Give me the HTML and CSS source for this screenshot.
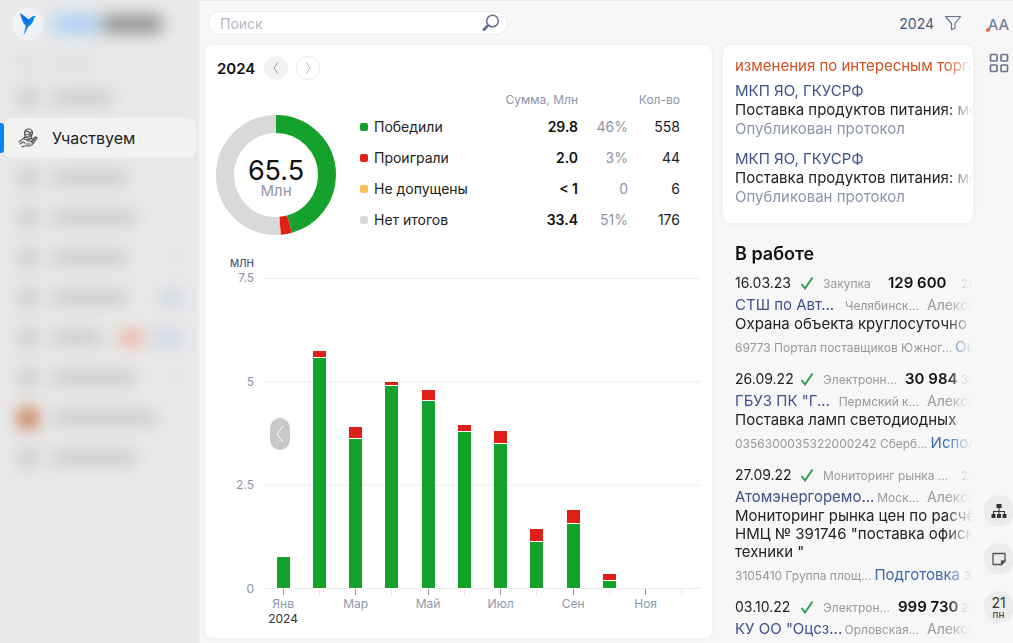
FILE: index.html
```html
<!DOCTYPE html>
<html lang="ru">
<head>
    <meta charset="UTF-8">
    <meta name="viewport" content="width=device-width, initial-scale=1.0">
    <title>Участвуем</title>
    <link rel="stylesheet" href="styles.css">
</head>
<body>
    <div class="app">
        <nav class="sidebar">
            <div class="brand">
                <span class="logo">
                    <svg width="18" height="24" viewBox="0 0 18 24"><path d="M1 1 9.500 7.500 12.500 5Q14 3.600 17 4.200L15 6Q14.200 11.500 9.500 14.500L4.500 23 6.800 14Q3 10.500 1 1Z" fill="#0a84ee"/><path d="M1 1 9.500 7.500 8 12Z" fill="#0870dc"/></svg>
                </span>
                <span class="blur blue w-50"></span>
                <span class="blur dark w-60"></span>
            </div>
            <div class="menu-item faint"><span class="blur icon"></span><span class="blur w-40"></span></div>
            <div class="menu-item"><span class="blur icon"></span><span class="blur w-60"></span></div>
            <a class="menu-item active" href="#">
                <svg width="21" height="20" viewBox="0 0 21 20" fill="none" stroke="#555" stroke-width="1.100" stroke-linecap="round" stroke-linejoin="round"><circle cx="10.500" cy="5" r="4"/><path d="M7 4q2-2 4 0t3-1M7 7q2-2 4 0t3-1M8 2.500q3 1 5 4.500M7 8l-1 3 4 1 4-2-1-2M1 14l5-4q2-1 4 0l4 1q1 2-1 2H9M2 16l3-2 2 1M4 19l2-1h6q3-1 7-8-1-2-3 0l-3 4M14 15l4-6M8 16h4"/></svg>
                <span>Участвуем</span>
            </a>
            <div class="menu-item"><span class="blur icon"></span><span class="blur w-75"></span></div>
            <div class="menu-item"><span class="blur icon"></span><span class="blur w-85"></span></div>
            <div class="menu-item"><span class="blur icon"></span><span class="blur w-75"></span><span class="blur pale w-15 end"></span></div>
            <div class="menu-item"><span class="blur icon"></span><span class="blur w-75"></span><span class="blur badge w-20 end"></span></div>
            <div class="menu-item"><span class="blur icon"></span><span class="blur w-50"></span><span class="blur red w-20 end"></span><span class="blur badge w-30"></span></div>
            <div class="menu-item"><span class="blur icon"></span><span class="blur w-85"></span><span class="blur pale w-15 end"></span></div>
            <div class="menu-item"><span class="blur icon photo"></span><span class="blur w-100"></span></div>
            <div class="menu-item"><span class="blur icon"></span><span class="blur w-85"></span></div>
        </nav>

        <main class="main">
            <header class="topbar">
                <form class="search">
                    <input type="text" placeholder="Поиск" aria-label="Поиск">
                    <button type="button" aria-label="Найти">
                        <svg width="18" height="18" viewBox="0 0 18 18" fill="none" stroke="#68718f"><circle cx="10.500" cy="7" r="5.800" stroke-width="1.500"/><path d="M6.300 11.300 5 12.500" stroke-width="1.500"/><path d="M5 12.500 2 15.500" stroke-width="3" stroke-linecap="round"/></svg>
                    </button>
                </form>
                <button class="filter" type="button">
                    2024
                    <svg width="18" height="16" viewBox="0 0 18 16" fill="none" stroke="#68718f" stroke-width="1.200" stroke-linejoin="round"><path d="M1.500 1.500h15L11 8.500V13l-3.500 1.800V8.500Z"/></svg>
                </button>
            </header>

            <div class="content">
                <section class="card stats">
                    <div class="period">
                        <h2>2024</h2>
                        <button class="round filled" type="button" aria-label="Назад"><svg width="8" height="14" viewBox="0 0 8 14"><path d="M6 1 2 7l4 6"/></svg></button>
                        <button class="round" type="button" aria-label="Вперёд"><svg width="8" height="14" viewBox="0 0 8 14"><path d="m2 1 4 6-4 6"/></svg></button>
                    </div>

                    <div class="summary">
                        <div class="donut">
                            <svg viewBox="0 0 120 120" fill="none" stroke-width="18">
                                <g transform="rotate(-90 60 60)">
                                    <circle cx="60" cy="60" r="51" pathLength="100" stroke="#14a22c" stroke-dasharray="45.700 54.300"/>
                                    <circle cx="60" cy="60" r="51" pathLength="100" stroke="#dd2118" stroke-dasharray="3 97" stroke-dashoffset="-45.700"/>
                                    <circle cx="60" cy="60" r="51" pathLength="100" stroke="#fdbd57" stroke-dasharray="0.300 99.700" stroke-dashoffset="-48.700"/>
                                    <circle cx="60" cy="60" r="51" pathLength="100" stroke="#d9d9d9" stroke-dasharray="51 49" stroke-dashoffset="-49"/>
                                </g>
                            </svg>
                            <div class="total"><strong>65.5</strong><span>Млн</span></div>
                        </div>
                        <table class="results">
                            <thead>
                                <tr><th></th><th>Сумма, Млн</th><th></th><th>Кол-во</th></tr>
                            </thead>
                            <tbody>
                                <tr><td class="won">Победили</td><td>29.8</td><td>46%</td><td>558</td></tr>
                                <tr><td class="lost">Проиграли</td><td>2.0</td><td>3%</td><td>44</td></tr>
                                <tr><td class="rejected">Не допущены</td><td>&lt; 1</td><td>0</td><td>6</td></tr>
                                <tr><td class="pending">Нет итогов</td><td>33.4</td><td>51%</td><td>176</td></tr>
                            </tbody>
                        </table>
                    </div>

                    <div class="chart">
                        <div class="unit">млн</div>
                        <div class="axis"><span>7.5</span><span>5</span><span>2.5</span><span>0</span></div>
                        <div class="plot">
                            <div class="bar"><i class="green" style="height: 10%"></i></div>
                            <div class="bar"><i class="red" style="height: 1.7%"></i><i class="green" style="height: 74.3%"></i></div>
                            <div class="bar"><i class="red" style="height: 3.3%"></i><i class="green" style="height: 48.2%"></i></div>
                            <div class="bar"><i class="red" style="height: 0.7%"></i><i class="green" style="height: 65.3%"></i></div>
                            <div class="bar"><i class="red" style="height: 3%"></i><i class="green" style="height: 60.4%"></i></div>
                            <div class="bar"><i class="red" style="height: 2%"></i><i class="green" style="height: 50.2%"></i></div>
                            <div class="bar"><i class="red" style="height: 3.9%"></i><i class="green" style="height: 46.3%"></i></div>
                            <div class="bar"><i class="red" style="height: 3.6%"></i><i class="green" style="height: 15%"></i></div>
                            <div class="bar"><i class="red" style="height: 4.3%"></i><i class="green" style="height: 20.5%"></i></div>
                            <div class="bar"><i class="red" style="height: 1.7%"></i><i class="green" style="height: 2.4%"></i></div>
                            <div class="bar"></div>
                            <div class="bar"></div>
                            <button class="prev" type="button" aria-label="Предыдущий год"><svg width="8" height="18" viewBox="0 0 8 18"><path d="M7 1 1 9l6 8"/></svg></button>
                        </div>
                        <div class="months">
                            <span>Янв<b>2024</b></span><span></span><span>Мар</span><span></span><span>Май</span><span></span>
                            <span>Июл</span><span></span><span>Сен</span><span></span><span>Ноя</span><span></span>
                        </div>
                    </div>
                </section>

                <aside class="feed">
                    <section class="card news">
                        <div class="fade">
                            <a class="news-title" href="#">изменения по интересным торга</a>
                            <article>
                                <a href="#">МКП ЯО, ГКУСРФ</a>
                                <p>Поставка продуктов питания: мо</p>
                                <span>Опубликован протокол</span>
                            </article>
                            <article>
                                <a href="#">МКП ЯО, ГКУСРФ</a>
                                <p>Поставка продуктов питания: мо</p>
                                <span>Опубликован протокол</span>
                            </article>
                        </div>
                    </section>

                    <section class="work fade">
                        <h2>В работе</h2>
                        <article>
                            <div class="row">
                                <time>16.03.23</time>
                                <svg class="check" width="14" height="14" viewBox="0 0 14 14"><path d="m1.500 8 3.500 4.500L12.500 1.500"/></svg>
                                <span class="type">Закупка</span><b>129 600</b><span class="count">28</span>
                            </div>
                            <div class="row company"><a href="#">СТШ по Авт...</a><span class="region">Челябинск...</span><span class="person">Алексе</span></div>
                            <p>Охрана объекта круглосуточно</p>
                            <div class="row source"><span>69773 Портал поставщиков Южног...</span><a href="#">Оц</a></div>
                        </article>
                        <article>
                            <div class="row">
                                <time>26.09.22</time>
                                <svg class="check" width="14" height="14" viewBox="0 0 14 14"><path d="m1.500 8 3.500 4.500L12.500 1.500"/></svg>
                                <span class="type">Электронн...</span><b>30 984</b><span class="count">30</span>
                            </div>
                            <div class="row company"><a href="#">ГБУЗ ПК "Г...</a><span class="region">Пермский к...</span><span class="person">Алексе</span></div>
                            <p>Поставка ламп светодиодных</p>
                            <div class="row source"><span>0356300035322000242 Сберб...</span><a href="#">Исполн</a></div>
                        </article>
                        <article>
                            <div class="row">
                                <time>27.09.22</time>
                                <svg class="check" width="14" height="14" viewBox="0 0 14 14"><path d="m1.500 8 3.500 4.500L12.500 1.500"/></svg>
                                <span class="type">Мониторинг рынка ...</span><span class="count">23</span>
                            </div>
                            <div class="row company"><a href="#">Атомэнергоремо...</a><span class="region">Моск...</span><span class="person">Алексе</span></div>
                            <p>Мониторинг рынка цен по расчё<br>НМЦ № 391746 "поставка офисн<br>техники "</p>
                            <div class="row source"><span>3105410 Группа площ...</span><a href="#">Подготовка за</a></div>
                        </article>
                        <article>
                            <div class="row">
                                <time>03.10.22</time>
                                <svg class="check" width="14" height="14" viewBox="0 0 14 14"><path d="m1.500 8 3.500 4.500L12.500 1.500"/></svg>
                                <span class="type">Электрон...</span><b>999 730</b><span class="count">23</span>
                            </div>
                            <div class="row company"><a href="#">КУ ОО "Оцсз...</a><span class="region">Орловская...</span><span class="person">Алексе</span></div>
                        </article>
                    </section>
                </aside>
            </div>
        </main>

        <div class="rail">
            <button class="user" type="button">АА</button>
            <button class="tiles" type="button" aria-label="Приложения">
                <svg width="20" height="20" viewBox="0 0 20 20" fill="none" stroke="#6c748f" stroke-width="1.700"><rect x="1.500" y="1.500" width="6.500" height="6.500" rx="1"/><rect x="12" y="1.500" width="6.500" height="6.500" rx="1"/><rect x="1.500" y="12" width="6.500" height="6.500" rx="1"/><rect x="12" y="12" width="6.500" height="6.500" rx="1"/></svg>
            </button>
            <div class="tools">
                <button type="button" aria-label="Структура">
                    <svg width="16" height="16" viewBox="0 0 16 16" fill="#333"><rect x="5.500" y="1" width="5" height="4"/><path d="M7.500 5h1v3H14v3h-1V9H8.500v2h-1V9H3v2H2V8h5.500Z"/><rect x="0.500" y="11" width="4" height="4"/><rect x="6" y="11" width="4" height="4"/><rect x="11.500" y="11" width="4" height="4"/></svg>
                </button>
                <button type="button" aria-label="Заметка">
                    <svg width="14" height="14" viewBox="0 0 14 14" fill="none" stroke="#555" stroke-width="1.300" stroke-linejoin="round"><path d="M1 1.500h12V9l-3.500 3.500H1Z"/><path d="M13 9H9.500v3.500Z" fill="#555"/></svg>
                </button>
                <button class="date" type="button">21<small>пн</small></button>
            </div>
        </div>
    </div>
</body>
</html>
```

FILE: styles.css
```css
* {
    box-sizing: border-box;
}
body {
    margin: 0;
    font-family: Inter, "Open Sans", sans-serif;
    font-size: 15px;
    color: #222;
    background-color: #f7f7f7;
}
h2, p {
    margin: 0;
}
a {
    color: #40528c;
    text-decoration: none;
}
button {
    padding: 0;
    border: none;
    background: none;
    font-family: inherit;
    cursor: pointer;
}
svg {
    display: block;
    flex-shrink: 0;
}
.app {
    display: grid;
    grid-template-columns: 200px minmax(0, 1fr) 40px;
    height: 100vh;
    overflow: hidden;
    border-top: 1px solid #e8e8e8;
}

/* Sidebar */
.sidebar {
    background-color: #e9e9e9;
    border-right: 2px solid #f0f0f0;
}
.brand {
    display: flex;
    align-items: center;
    height: 45px;
    padding-left: 12px;
}
.logo {
    display: flex;
    align-items: center;
    justify-content: center;
    width: 32px;
    height: 32px;
    margin-right: 8px;
    border-radius: 50%;
    background-color: #f1f2f7;
}
.menu-item {
    display: flex;
    align-items: center;
    height: 40px;
    padding: 0 15px 0 18px;
}
.menu-item.faint {
    height: 32px;
    opacity: 0.3;
}
.menu-item.active {
    position: relative;
    gap: 13px;
    margin: 0 2px 0 4px;
    padding-left: 14px;
    border-radius: 8px;
    background-color: #f2f2f2;
    color: #222;
    font-size: 16px;
}
.menu-item.active::before {
    content: "";
    position: absolute;
    left: -4px;
    top: 5px;
    bottom: 5px;
    width: 4px;
    border-radius: 0 3px 3px 0;
    background-color: #0a84f5;
}
.blur {
    height: 14px;
    border-radius: 4px;
    background-color: #c9c9c9;
    filter: blur(8px);
}
.blur.icon {
    width: 20px;
    height: 20px;
    margin-right: 14px;
    background-color: #cdcdcd;
}
.blur.blue { height: 18px; background-color: #acd0f8; }
.blur.dark { height: 18px; background-color: #909090; }
.blur.badge { background-color: #ccd3e4; }
.blur.pale { background-color: #dfe4ec; }
.blur.red { background-color: #efa899; margin-right: 8px; }
.blur.photo { background-color: #c87850; }
.end { margin-left: auto; }
.w-15 { width: 15px; }
.w-20 { width: 24px; }
.w-30 { width: 32px; }
.w-40 { width: 40px; }
.w-50 { width: 50px; }
.w-60 { width: 60px; }
.w-75 { width: 75px; }
.w-85 { width: 84px; }
.w-100 { width: 105px; }

/* Top bar */
.main {
    display: flex;
    flex-direction: column;
    min-height: 0;
    padding: 0 0 5px 5px;
}
.topbar {
    display: flex;
    align-items: center;
    justify-content: space-between;
    flex-shrink: 0;
    height: 44px;
    padding: 0 11px 0 3px;
}
.search {
    display: flex;
    align-items: center;
    width: 300px;
    height: 24px;
    padding: 0 7px 0 11px;
    border: 1px solid #ebebeb;
    border-radius: 12px;
    background-color: #fff;
}
.search input {
    flex: 1;
    min-width: 0;
    padding: 0;
    border: none;
    outline: none;
    background: none;
    font-family: inherit;
    font-size: 14px;
}
.search input::placeholder {
    color: #b4b8c4;
}
.filter {
    display: flex;
    align-items: center;
    gap: 10px;
    color: #4a577f;
    font-size: 14px;
}

/* Cards */
.content {
    display: grid;
    grid-template-columns: minmax(0, 1fr) 250px;
    gap: 11px;
    flex: 1;
    min-height: 0;
}
.card {
    border-radius: 8px;
    background-color: #fff;
    box-shadow: 0 0 6px rgba(0, 0, 0, 0.06);
}
.stats {
    display: flex;
    flex-direction: column;
    padding: 11px 12px 0 0;
}
.period {
    display: flex;
    align-items: center;
    gap: 8px;
    padding-left: 12px;
}
.period h2 {
    margin-right: 1px;
    font-size: 15px;
    font-weight: 600;
    color: #111;
}
.round {
    display: flex;
    align-items: center;
    justify-content: center;
    width: 24px;
    height: 24px;
    border: 1px solid #e8e8e8;
    border-radius: 50%;
}
.round.filled {
    background-color: #f2f2f2;
    border-color: #f2f2f2;
}
.round path, .prev path {
    fill: none;
    stroke: #bbb;
}
.round.filled path {
    stroke: #999eae;
}
.summary {
    display: flex;
    align-items: flex-end;
    gap: 24px;
    padding: 7px 20px 0 11px;
}
.donut {
    display: grid;
    flex-shrink: 0;
    width: 120px;
}
.donut > * {
    grid-area: 1 / 1;
}
.total {
    align-self: center;
    padding-top: 10px;
    text-align: center;
    line-height: 18px;
    color: #8e96ab;
    font-size: 15px;
}
.total strong {
    display: block;
    line-height: 22px;
    font-size: 27px;
    font-weight: 400;
    color: #111;
}
.results {
    flex: 1;
    border-collapse: collapse;
    text-align: right;
}
.results th {
    height: 24px;
    padding: 0;
    font-size: 12px;
    font-weight: 400;
    color: #8e96ab;
}
.results td {
    height: 31px;
    padding: 0;
    font-size: 14px;
}
.results td:first-child {
    text-align: left;
}
.results td:first-child::before {
    content: "";
    display: inline-block;
    width: 8px;
    height: 8px;
    margin-right: 6px;
    border-radius: 2px;
    vertical-align: 1px;
}
.results .won::before { background-color: #14a22c; }
.results .lost::before { background-color: #dd2118; }
.results .rejected::before { background-color: #fdbd57; }
.results .pending::before { background-color: #d9d9d9; }
.results td:nth-child(2) {
    font-weight: 600;
    color: #111;
}
.results td:nth-child(3) {
    width: 50px;
    color: #8e96ab;
}
.results td:nth-child(4) {
    width: 52px;
}

/* Chart */
.chart {
    display: grid;
    grid-template-columns: 49px minmax(0, 1fr);
    grid-template-rows: 16px minmax(0, 1fr) 49px;
    column-gap: 11px;
    flex: 1;
    min-height: 0;
    padding-top: 20px;
    font-size: 12px;
    color: #8e96ab;
}
.unit {
    grid-row: 1;
    grid-column: 1;
    text-align: right;
    text-transform: uppercase;
    font-size: 10px;
    font-weight: 500;
    line-height: 16px;
    color: #4a577f;
}
.axis {
    grid-row: 2;
    grid-column: 1;
    display: flex;
    flex-direction: column;
    justify-content: space-between;
    margin-bottom: -7px;
    text-align: right;
    line-height: 14px;
}
.plot {
    position: relative;
    grid-row: 2;
    grid-column: 2;
    display: flex;
    margin-top: 7px;
    border-bottom: 1px solid #e9e9e9;
    background-image: linear-gradient(#ececec 1px, transparent 1px);
    background-size: 100% 33.33%;
}
.bar {
    display: flex;
    flex: 1;
    flex-direction: column;
    align-items: center;
    justify-content: flex-end;
    gap: 1px;
}
.bar i {
    width: 13px;
    outline: 1px solid #fff;
}
.green { background-color: #14a22c; }
.red { background-color: #dd2118; }
.prev {
    position: absolute;
    left: 5px;
    top: 45%;
    display: flex;
    align-items: center;
    justify-content: center;
    width: 20px;
    height: 32px;
    border-radius: 10px;
    background-color: #c8c8c8;
}
.prev path {
    stroke: #fff;
}
.months {
    grid-row: 3;
    grid-column: 2;
    display: flex;
}
.months span {
    flex: 1;
    text-align: center;
    line-height: 15px;
}
.months span::before {
    content: "";
    display: block;
    width: 1px;
    height: 6px;
    margin: 0 auto 1px;
    background-color: #8e96ab;
}
.months span:empty::before {
    background-color: #e2e2e2;
}
.months b {
    display: block;
    font-weight: 400;
    color: #333;
}

/* Feed */
.feed {
    display: flex;
    flex-direction: column;
    min-height: 0;
}
.fade {
    overflow: hidden;
    white-space: nowrap;
    mask-image: linear-gradient(to right, #000 calc(100% - 28px), transparent);
}
.news {
    flex-shrink: 0;
    padding: 11px 0 17px 12px;
    line-height: 19px;
}
.news a, .news span {
    display: block;
}
.news .news-title {
    margin-bottom: 6px;
    color: #d0511f;
}
.news article + article {
    margin-top: 11px;
}
.news span {
    color: #8e96ab;
}
.work {
    padding: 20px 0 0 12px;
}
.work h2 {
    margin-bottom: 7px;
    font-size: 18px;
    font-weight: 600;
    line-height: 22px;
    color: #111;
}
.work article {
    margin-bottom: 7px;
}
.work p {
    line-height: 18px;
}
.row {
    display: flex;
    align-items: baseline;
    height: 22px;
    line-height: 22px;
    color: #999;
    font-size: 12px;
}
.row time {
    width: 65px;
    font-size: 14px;
    color: #222;
}
.row .check {
    align-self: center;
    margin-right: 9px;
}
.check path {
    fill: none;
    stroke: #2c9647;
    stroke-width: 1.8;
}
.type {
    min-width: 57px;
    margin-right: 8px;
}
.row b {
    font-size: 15px;
    font-weight: 600;
    color: #111;
}
.count {
    width: 12px;
    margin-left: auto;
}
.company {
    height: 21px;
    line-height: 21px;
}
.company a {
    font-size: 15px;
}
.region {
    margin-left: auto;
}
.person {
    width: 46px;
    margin-left: 8px;
    font-size: 14px;
}
.source {
    gap: 3px;
    height: 28px;
    line-height: 28px;
}
.source a {
    font-size: 15px;
    color: #3d68b0;
}

/* Right rail */
.rail {
    display: flex;
    flex-direction: column;
    align-items: center;
    padding: 13px 0 20px 11px;
}
.user {
    position: relative;
    height: 20px;
    font-size: 15px;
    font-weight: 500;
    color: #7a8299;
}
.user::before {
    content: "";
    position: absolute;
    left: -2px;
    bottom: 2px;
    width: 4px;
    height: 4px;
    border-radius: 50%;
    background-color: #f26a35;
}
.tiles {
    margin-top: 19px;
}
.tools {
    display: flex;
    flex-direction: column;
    gap: 16px;
    margin-top: auto;
}
.tools button {
    display: flex;
    flex-direction: column;
    align-items: center;
    justify-content: center;
    width: 30px;
    height: 32px;
    border-radius: 16px;
    background-color: #ececec;
    color: #333;
}
.tools .date {
    font-size: 14px;
    line-height: 13px;
}
.tools small {
    font-size: 10px;
    line-height: 10px;
}
```
